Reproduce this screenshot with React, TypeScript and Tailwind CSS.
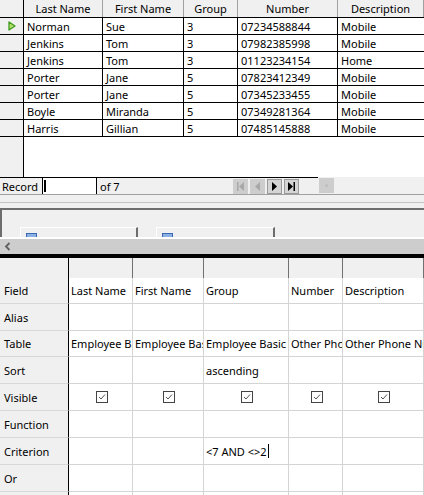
import React from 'react';

type Row = [string, string, string, string, string];

const records: Row[] = [
  ['Norman', 'Sue', '3', '07234588844', 'Mobile'],
  ['Jenkins', 'Tom', '3', '07982385998', 'Mobile'],
  ['Jenkins', 'Tom', '3', '01123234154', 'Home'],
  ['Porter', 'Jane', '5', '07823412349', 'Mobile'],
  ['Porter', 'Jane', '5', '07345233455', 'Mobile'],
  ['Boyle', 'Miranda', '5', '07349281364', 'Mobile'],
  ['Harris', 'Gillian', '5', '07485145888', 'Mobile']
];

const headers = ['Last Name', 'First Name', 'Group', 'Number', 'Description'];
const topWidths = ['w-[79px]', 'w-[81px]', 'w-[54px]', 'w-[100px]', 'flex-1'];

const designWidths = ['w-[64px]', 'w-[71px]', 'w-[85px]', 'w-[54px]', 'flex-1'];

type DesignRow = {
  label: string;
  height: string;
  cells?: string[];
  checks?: boolean;
  criterion?: boolean;
};

const designRows: DesignRow[] = [
  { label: 'Field', height: 'h-[26px]', cells: ['Last Name', 'First Name', 'Group', 'Number', 'Description'] },
  { label: 'Alias', height: 'h-[27px]' },
  {
    label: 'Table',
    height: 'h-[26px]',
    cells: ['Employee Basic', 'Employee Basic', 'Employee Basic', 'Other Phone Numbers', 'Other Phone Numbers']
  },
  { label: 'Sort', height: 'h-[27px]', cells: ['', '', 'ascending', '', ''] },
  { label: 'Visible', height: 'h-[27px]', checks: true },
  { label: 'Function', height: 'h-[27px]' },
  { label: 'Criterion', height: 'h-[27px]', criterion: true },
  { label: 'Or', height: 'h-[27px]' },
  { label: '', height: 'h-[27px]' }
];

function CurrentRowArrow() {
  return (
    <svg width="8" height="10" viewBox="0 0 8 10" aria-hidden="true">
      <path d="M1 1 L7 5 L1 9 Z" fill="#b7e06a" stroke="#3c9a1e" strokeWidth="1.3" strokeLinejoin="round" />
    </svg>
  );
}

function NavButton({ kind, enabled }: { kind: 'first' | 'prev' | 'next' | 'last' | 'new'; enabled: boolean }) {
  const color = enabled ? '#000000' : '#a8a8a8';
  return (
    <div
      className={
        enabled
          ? 'flex h-[15px] w-[15px] shrink-0 items-center justify-center border border-[#9a9a9a] bg-[#d4d4d4]'
          : 'flex h-[15px] w-[15px] shrink-0 items-center justify-center border border-[#cdcdcd] bg-[#cdcdcd]'
      }
    >
      <svg width="11" height="11" viewBox="0 0 11 11" aria-hidden="true">
        {kind === 'first' && (
          <>
            <rect x="2" y="1" width="1.5" height="9" fill={color} />
            <path d="M9 1 L4 5.5 L9 10 Z" fill={color} />
          </>
        )}
        {kind === 'prev' && <path d="M8 1 L3 5.5 L8 10 Z" fill={color} />}
        {kind === 'next' && <path d="M3 1 L8 5.5 L3 10 Z" fill={color} />}
        {kind === 'last' && (
          <>
            <path d="M2 1 L7 5.5 L2 10 Z" fill={color} />
            <rect x="7.5" y="1" width="1.5" height="9" fill={color} />
          </>
        )}
        {kind === 'new' && <circle cx="5.5" cy="5.5" r="1.5" fill="#bdbdbd" />}
      </svg>
    </div>
  );
}

function CheckBox() {
  return (
    <svg width="12" height="12" viewBox="0 0 12 12" aria-hidden="true">
      <rect x="0.5" y="0.5" width="11" height="11" fill="#ffffff" stroke="#444444" />
      <path d="M3 6 L5 8 L9 3.5" fill="none" stroke="#555555" strokeWidth="1" />
    </svg>
  );
}

function TableWindow({ width }: { width: string }) {
  return (
    <div className={`${width} h-[30px] shrink-0 border-l border-t border-white border-r-2 border-r-[#6d6d6d] bg-[#f0f0f0] pl-[5px] pt-[5px]`}>
      <div className="h-[10px] w-[11px] border border-[#3b69b5] bg-[#8db0e3]" />
    </div>
  );
}

export default function App() {
  return (
    <div className="h-[495px] w-[424px] overflow-hidden bg-white text-[11px] text-black" style={{ fontFamily: '"Noto Sans", "Open Sans", sans-serif' }}>
      {/* table view */}
      <div className="flex h-[177px] flex-col">
        <div className="flex h-[18px] border-b border-black">
          <div className="w-[24px] shrink-0 border-r border-black bg-[#f0f0f0]" />
          {headers.map((label, index) => (
            <div
              key={label}
              className={`${topWidths[index]} flex shrink-0 items-center justify-center border-r border-[#a0a0a0] bg-[#f0f0f0] leading-none`}
            >
              {label}
            </div>
          ))}
        </div>
        {records.map((row, rowIndex) => (
          <div key={rowIndex} className="flex h-[17px] border-b border-black">
            <div className="flex w-[24px] shrink-0 items-center justify-center border-r border-black bg-[#f0f0f0]">
              {rowIndex === 0 ? <CurrentRowArrow /> : null}
            </div>
            {row.map((value, index) => (
              <div
                key={index}
                className={`${topWidths[index]} flex shrink-0 items-center overflow-hidden whitespace-nowrap pl-[3px] leading-none ${index < 4 ? 'border-r border-black' : ''}`}
              >
                {value}
              </div>
            ))}
          </div>
        ))}
        <div className="flex flex-1">
          <div className="w-[24px] shrink-0 border-r border-black bg-[#f0f0f0]" />
          <div className="flex-1 bg-white" />
        </div>
      </div>

      {/* record navigation */}
      <div className="flex h-[18px] border-b border-[#a0a0a0] bg-[#f0f0f0]">
        <div className="flex w-[318px] shrink-0 items-center whitespace-nowrap border-t border-black">
          <span className="w-[42px] shrink-0 pl-[2px] leading-none">Record</span>
          <div className="flex h-full w-[55px] shrink-0 items-center border-x border-black bg-white pl-[1px]">
            <div className="h-[12px] w-[2px] bg-black" />
          </div>
          <span className="w-[136px] shrink-0 pl-[3px] leading-none">of 7</span>
          <div className="flex shrink-0 gap-[2px]">
            <NavButton kind="first" enabled={false} />
            <NavButton kind="prev" enabled={false} />
            <NavButton kind="next" enabled />
            <NavButton kind="last" enabled />
          </div>
        </div>
        <div className="flex items-center pl-[1px]">
          <NavButton kind="new" enabled={false} />
        </div>
      </div>

      {/* splitter */}
      <div className="h-[7px] bg-[#f0f0f0]" />
      <div className="h-px bg-[#c4c4c4]" />
      <div className="h-[5px] bg-[#f0f0f0]" />
      <div className="h-[2px] bg-[#6d6d6d]" />

      {/* table windows */}
      <div className="flex h-[27px] items-start gap-[18px] overflow-hidden border-l-2 border-[#6d6d6d] bg-[#f0f0f0] pl-[18px] pt-[17px]">
        <TableWindow width="w-[118px]" />
        <TableWindow width="w-[119px]" />
      </div>

      {/* scrollbar */}
      <div className="flex h-[17px] items-center border-t-2 border-white bg-[#cdcdcd] pl-[4px]">
        <svg width="7" height="9" viewBox="0 0 7 9" aria-hidden="true">
          <path d="M5.5 1 L2 4.5 L5.5 8" fill="none" stroke="#606060" strokeWidth="1.8" />
        </svg>
      </div>
      <div className="h-[4px] bg-black" />

      {/* design grid */}
      <div className="flex h-[20px]">
        <div className="w-[69px] shrink-0 border-r border-black bg-[#f0f0f0]" />
        {designWidths.map((width, index) => (
          <div key={index} className={`${width} shrink-0 border-r border-[#707070] bg-[#f0f0f0]`} />
        ))}
      </div>
      {designRows.map((row, rowIndex) => (
        <div key={rowIndex} className={`flex ${row.height}`}>
          <div className="flex w-[69px] shrink-0 items-center border-b border-r border-b-[#d8d8d8] border-r-black bg-[#f0f0f0] pl-[4px] leading-none">
            {row.label}
          </div>
          {designWidths.map((width, index) => (
            <div
              key={index}
              className={`${width} flex shrink-0 items-center overflow-hidden whitespace-nowrap border-b border-r border-[#d4d4d4] pl-[2px] leading-none ${row.checks ? 'justify-center pl-0' : ''}`}
            >
              {row.cells ? row.cells[index] : null}
              {row.checks ? <CheckBox /> : null}
              {row.criterion && index === 2 ? (
                <>
                  <span>&lt;7 AND &lt;&gt;2</span>
                  <span className="ml-px inline-block h-[14px] w-px bg-black" />
                </>
              ) : null}
            </div>
          ))}
        </div>
      ))}
    </div>
  );
}
